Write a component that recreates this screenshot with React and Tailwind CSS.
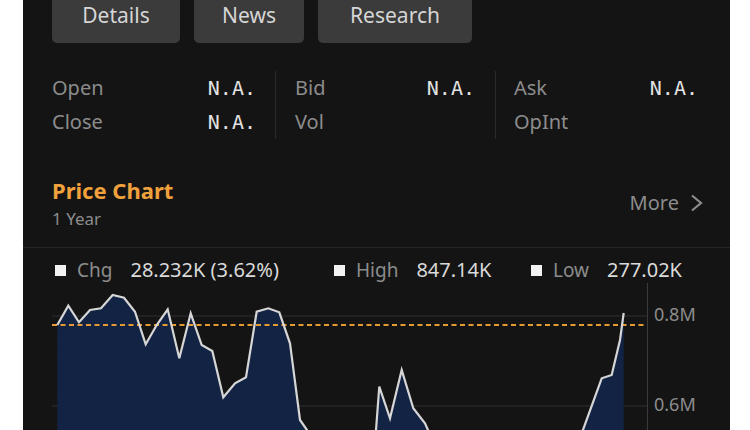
import { Fragment } from "react";

const tabs = [
  { label: "Details", width: "w-[128px]" },
  { label: "News", width: "w-[110px]" },
  { label: "Research", width: "w-[154px]" },
];

const points = [
  [34.3, 42], [45.3, 22.7], [56, 39.3], [67, 27], [78, 25.3], [89.7, 12], [101, 14.7], [112, 28.7],
  [122.7, 61.3], [133.7, 42], [144.7, 26.3], [156.3, 75.3], [167.7, 30.3], [178.7, 62], [189.3, 68],
  [200.3, 114.3], [212, 100.3], [223, 94.3], [233.7, 28.7], [245.3, 25.3], [256.3, 29.3], [267, 60.3],
  [277, 137], [284, 147], [295, 175], [306, 195], [317, 210], [328, 190], [339, 215], [345.3, 248],
  [356.3, 103.7], [367, 135.3], [378.7, 87], [390.3, 125.3], [402, 140.3], [413, 165], [424, 190],
  [435, 180], [446, 220], [457, 240], [468, 225], [479, 262], [490, 268], [501, 250], [512, 230],
  [523, 215], [534, 200], [548.7, 178], [578.7, 95.3], [588.7, 92], [597, 57], [600.7, 30],
];

const line = points.map(([x, y], i) => `${i ? "L" : "M"}${x},${y}`).join(" ");
const area = `${line} L600.7,300 L34.3,300 Z`;

function StatCol({ rows, className }) {
  return (
    <div className={className}>
      {rows.map(([label, value]) => (
        <div key={label} className="flex h-[34px] items-center justify-between">
          <span className="text-[20px] text-[#8c8c8c]">{label}</span>
          <span className="font-['DejaVu_Sans_Mono',monospace] text-[20px] text-[#e2e2e2]">{value}</span>
        </div>
      ))}
    </div>
  );
}

function LegendItem({ label, value, className }) {
  return (
    <div className={`flex items-center ${className}`}>
      <span className="h-[11px] w-[11px] bg-[#f2f2f2]" />
      <span className="ml-[11px] text-[19px] text-[#8c8c8c]">{label}</span>
      <span className="ml-[18px] text-[20px] text-[#dadada]">{value}</span>
    </div>
  );
}

function PriceChart() {
  return (
    <svg width="707" height="160" viewBox="0 0 707 160" className="block">
      <line x1="29" y1="33" x2="624" y2="33" stroke="#2e2e2e" strokeWidth="1" />
      <line x1="29" y1="123" x2="624" y2="123" stroke="#2e2e2e" strokeWidth="1" />
      <path d={area} fill="#122344" />
      <line x1="29" y1="42" x2="624" y2="42" stroke="#e59a33" strokeWidth="2" strokeDasharray="5 3.5" />
      <path d={line} fill="none" stroke="#d6d6d6" strokeWidth="2.2" strokeLinejoin="miter" />
      <line x1="624.5" y1="0" x2="624.5" y2="160" stroke="#3a3a3a" strokeWidth="1" />
      <text x="631" y="38" fill="#8c8c8c" fontSize="18" fontFamily="Noto Sans, sans-serif">0.8M</text>
      <text x="631" y="128" fill="#8c8c8c" fontSize="18" fontFamily="Noto Sans, sans-serif">0.6M</text>
    </svg>
  );
}

export default function App() {
  return (
    <div className="flex h-[430px] w-[750px] overflow-hidden bg-white font-['Noto_Sans',sans-serif]">
      <div className="ml-[23px] w-[707px] shrink-0 bg-[#141414]">
        <div className="-mt-[4px] flex gap-[14px] pl-[29px]">
          {tabs.map((tab) => (
            <div
              key={tab.label}
              className={`flex h-[47px] ${tab.width} items-center justify-center rounded-[5px] bg-[#3b3b3b] pb-[8px] text-[21px] text-[#d6d6d6]`}
            >
              {tab.label}
            </div>
          ))}
        </div>

        <div className="mt-[28px] flex pl-[29px]">
          <StatCol
            className="w-[224px] border-r border-[#2a2a2a] pr-[19px]"
            rows={[["Open", "N.A."], ["Close", "N.A."]]}
          />
          <StatCol
            className="w-[220px] border-r border-[#2a2a2a] pl-[19px] pr-[20px]"
            rows={[["Bid", "N.A."], ["Vol", ""]]}
          />
          <StatCol className="w-[202px] pl-[18px]" rows={[["Ask", "N.A."], ["OpInt", ""]]} />
        </div>

        <div className="mt-[37px] flex items-center justify-between border-b border-[#262626] pb-[17px] pl-[29px] pr-[27px]">
          <div>
            <div className="text-[22px] font-bold leading-[28px] text-[#f0a13c]">Price Chart</div>
            <div className="mt-[4px] text-[17px] leading-[22px] text-[#8c8c8c]">1 Year</div>
          </div>
          <div className="flex items-center gap-[11px] text-[20px] text-[#8c8c8c]">
            <span>More</span>
            <svg width="13" height="18" viewBox="0 0 13 18" fill="none">
              <path d="M2 1.5 L11 9 L2 16.5" stroke="#8c8c8c" strokeWidth="2.2" />
            </svg>
          </div>
        </div>

        <div className="mt-[9px] flex h-[26px] pl-[32px] leading-[26px]">
          <LegendItem className="w-[279px]" label="Chg" value="28.232K (3.62%)" />
          <LegendItem className="w-[197px]" label="High" value="847.14K" />
          <LegendItem label="Low" value="277.02K" />
        </div>

        <PriceChart />
      </div>
      <div className="flex-1 bg-white" />
    </div>
  );
}
